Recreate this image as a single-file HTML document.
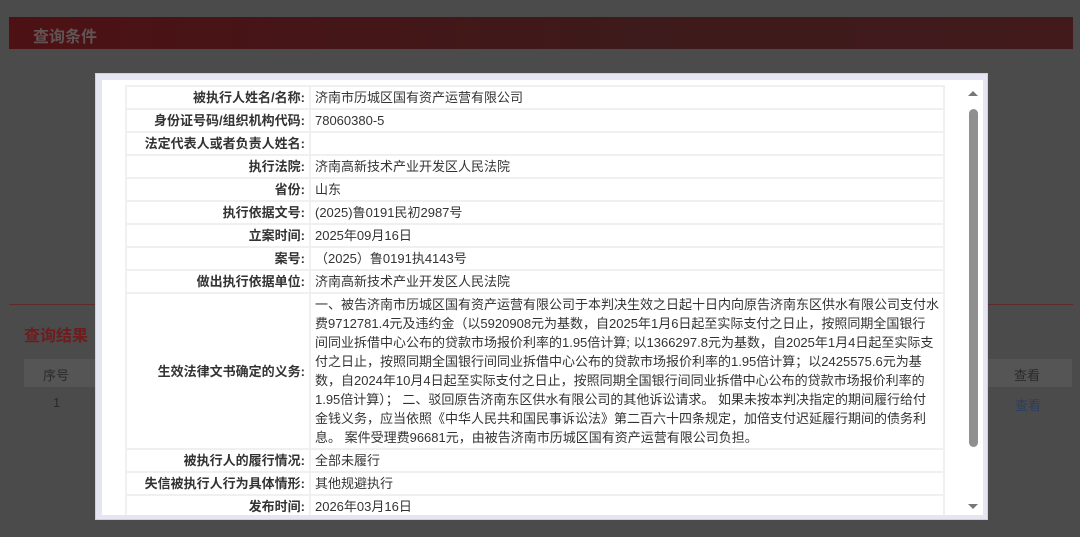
<!DOCTYPE html>
<html><head><meta charset="utf-8"><style>
*{margin:0;padding:0;box-sizing:border-box}
body{width:1080px;height:537px;background:#4b4b4b;position:relative;overflow:hidden;font-family:"Liberation Sans","Noto Sans CJK SC",sans-serif;font-size:13px;color:#333}
.hdr{position:absolute;left:9px;top:17px;width:1064px;height:32px;background:linear-gradient(90deg,#4d1114,#3d1a1b 60%,#421a1c);}
.hdr span{position:absolute;left:24px;top:6px;font-size:16px;font-weight:bold;color:#625454}
.line{position:absolute;left:9px;top:304px;width:1064px;height:1px;background:#5e2a2c}
.res{position:absolute;left:24px;top:322px;font-size:16px;font-weight:bold;color:#6e1c1e}
.th{position:absolute;left:24px;top:359px;width:1048px;height:28px;background:#555}
.th b{position:absolute;top:6px;font-weight:normal;color:#2a2a2a;font-size:13px}
.modal{position:absolute;left:95px;top:73px;width:893px;height:447px;background:#e6e6f2;border:1px solid #cfcfe0}
.inner{position:absolute;left:6px;top:6px;width:881px;height:435px;background:#fff;overflow:hidden}
table{position:absolute;left:23px;top:5px;width:820px;border-collapse:collapse}
td{border:2px solid #f0f0f0;height:23px;padding:0 4px;line-height:19px;vertical-align:middle;white-space:nowrap}
td.l{width:184px;text-align:right;font-weight:bold;color:#333;padding-right:4px}
.sb{position:absolute;left:867px;top:29px;width:9px;height:338px;background:#8f8f8f;border-radius:5px}
.up{position:absolute;left:866px;top:11px;width:0;height:0;border-left:5px solid transparent;border-right:5px solid transparent;border-bottom:5px solid #777}
.dn{position:absolute;left:866px;top:424px;width:0;height:0;border-left:5px solid transparent;border-right:5px solid transparent;border-top:5px solid #777}
</style></head><body>
<div class="hdr"><span>查询条件</span></div>
<div class="line"></div>
<div class="res">查询结果</div>
<div class="th"><b style="left:19px">序号</b><b style="left:990px">查看</b></div>
<div style="position:absolute;left:53px;top:395px;color:#2a2a2a">1</div>
<div style="position:absolute;left:1015px;top:395px;color:#2d3e5c">查看</div>
<div class="modal"><div class="inner">
<table>
<tr><td class="l">被执行人姓名/名称:</td><td>济南市历城区国有资产运营有限公司</td></tr>
<tr><td class="l">身份证号码/组织机构代码:</td><td>78060380-5</td></tr>
<tr><td class="l">法定代表人或者负责人姓名:</td><td></td></tr>
<tr><td class="l">执行法院:</td><td>济南高新技术产业开发区人民法院</td></tr>
<tr><td class="l">省份:</td><td>山东</td></tr>
<tr><td class="l">执行依据文号:</td><td>(2025)鲁0191民初2987号</td></tr>
<tr><td class="l">立案时间:</td><td>2025年09月16日</td></tr>
<tr><td class="l">案号:</td><td>（2025）鲁0191执4143号</td></tr>
<tr><td class="l">做出执行依据单位:</td><td>济南高新技术产业开发区人民法院</td></tr>
<tr><td class="l">生效法律文书确定的义务:</td><td style="padding:1px 4px">一、被告济南市历城区国有资产运营有限公司于本判决生效之日起十日内向原告济南东区供水有限公司支付水<br>费9712781.4元及违约金（以5920908元为基数，自2025年1月6日起至实际支付之日止，按照同期全国银行<br>间同业拆借中心公布的贷款市场报价利率的1.95倍计算; 以1366297.8元为基数，自2025年1月4日起至实际支<br>付之日止，按照同期全国银行间同业拆借中心公布的贷款市场报价利率的1.95倍计算；以2425575.6元为基<br>数，自2024年10月4日起至实际支付之日止，按照同期全国银行间同业拆借中心公布的贷款市场报价利率的<br>1.95倍计算）； 二、驳回原告济南东区供水有限公司的其他诉讼请求。 如果未按本判决指定的期间履行给付<br>金钱义务，应当依照《中华人民共和国民事诉讼法》第二百六十四条规定，加倍支付迟延履行期间的债务利<br>息。 案件受理费96681元，由被告济南市历城区国有资产运营有限公司负担。</td></tr>
<tr><td class="l">被执行人的履行情况:</td><td>全部未履行</td></tr>
<tr><td class="l">失信被执行人行为具体情形:</td><td>其他规避执行</td></tr>
<tr><td class="l">发布时间:</td><td>2026年03月16日</td></tr>
</table>
<div class="up"></div><div class="sb"></div><div class="dn"></div>
</div></div>
</body></html>
